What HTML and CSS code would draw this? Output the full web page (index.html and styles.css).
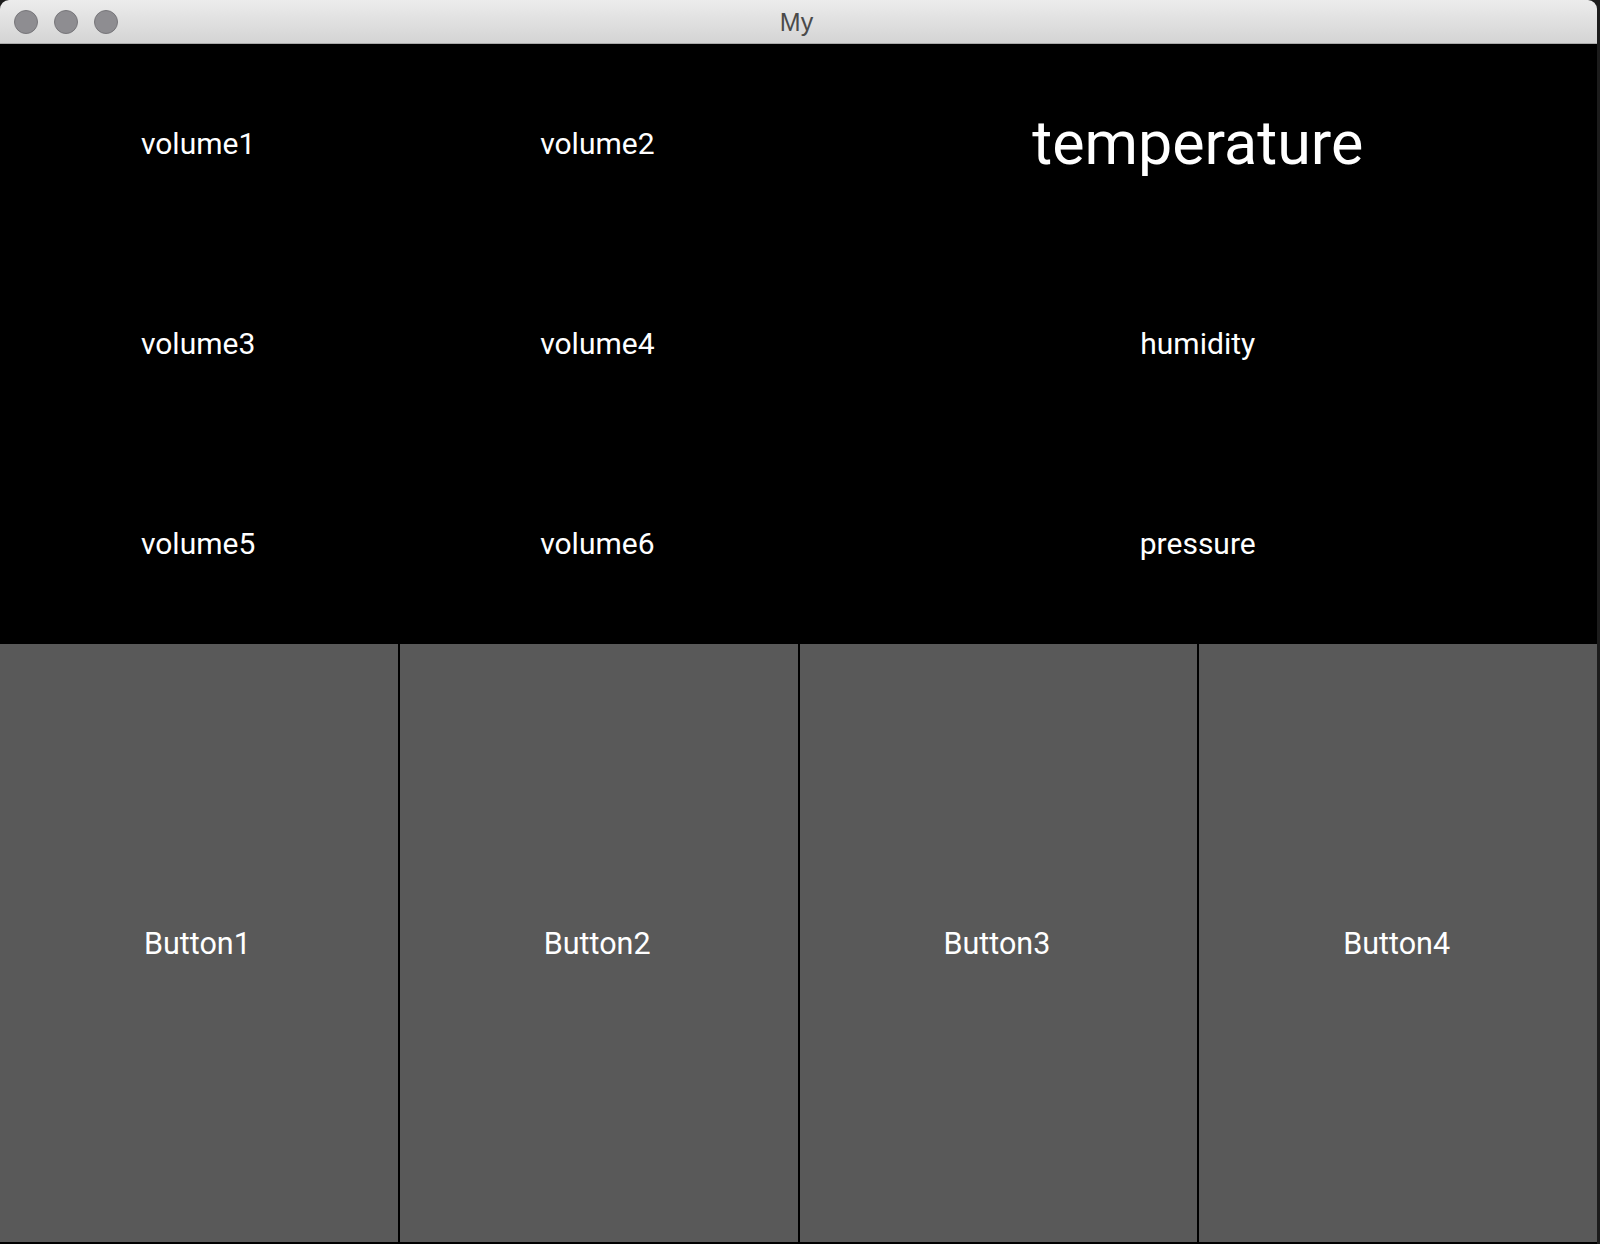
FILE: index.html
```html
<!DOCTYPE html>
<html>
<head>
<meta charset="utf-8">
<link rel="stylesheet" href="styles.css">
</head>
<body>
<div class="window">
  <div class="titlebar">
    <div class="lights">
      <span class="light"></span>
      <span class="light"></span>
      <span class="light"></span>
    </div>
    <div class="title">My</div>
  </div>
  <div class="content">
    <div class="labels">
      <div class="cell">volume1</div>
      <div class="cell">volume2</div>
      <div class="cell wide big">temperature</div>
      <div class="cell">volume3</div>
      <div class="cell">volume4</div>
      <div class="cell wide">humidity</div>
      <div class="cell">volume5</div>
      <div class="cell">volume6</div>
      <div class="cell wide">pressure</div>
    </div>
    <div class="buttons">
      <div class="btn">Button1</div>
      <div class="btn">Button2</div>
      <div class="btn">Button3</div>
      <div class="btn">Button4</div>
    </div>
  </div>
</div>
</body>
</html>
```
FILE: styles.css
```css
html, body {
  margin: 0;
  padding: 0;
  background: #1c1c1c;
  width: 1600px;
  height: 1244px;
  overflow: hidden;
}
.window {
  width: 1597px;
  height: 1244px;
  display: flex;
  flex-direction: column;
  background: #000;
  border-radius: 9px 9px 0 0;
  overflow: hidden;
}
.titlebar {
  height: 43px;
  flex: 0 0 43px;
  background: linear-gradient(#ececec, #d4d4d4);
  border-bottom: 1px solid #ababab;
  position: relative;
  display: flex;
  align-items: center;
  justify-content: center;
}
.lights {
  position: absolute;
  left: 14px;
  top: 10px;
  display: flex;
  gap: 16px;
}
.light {
  width: 22px;
  height: 22px;
  border-radius: 50%;
  background: #8e8d91;
  border: 1px solid #77767a;
}
.title {
  font-family: "Liberation Sans", Arial, sans-serif;
  font-size: 25px;
  color: #4a4a4a;
  margin-left: -4px;
  margin-top: 2px;
}
.content {
  flex: 1;
  display: flex;
  flex-direction: column;
  background: #000;
}
.labels {
  height: 600px;
  display: grid;
  grid-template-columns: repeat(4, 1fr);
  grid-template-rows: repeat(3, 200px);
}
.cell {
  display: flex;
  align-items: center;
  justify-content: center;
  padding-right: 3px;
  padding-bottom: 2px;
  font-family: Roboto, "Noto Sans", sans-serif;
  font-size: 30px;
  color: #fff;
}
.wide {
  grid-column: span 2;
  padding-right: 0;
}
.big {
  font-size: 61px;
}
.buttons {
  height: 598px;
  display: grid;
  grid-template-columns: repeat(4, 1fr);
  gap: 2px;
  background: #000;
}
.btn {
  background: #595959;
  display: flex;
  align-items: center;
  justify-content: center;
  padding-right: 3px;
  font-family: Roboto, "Noto Sans", sans-serif;
  font-size: 30.5px;
  color: #fff;
}
```
